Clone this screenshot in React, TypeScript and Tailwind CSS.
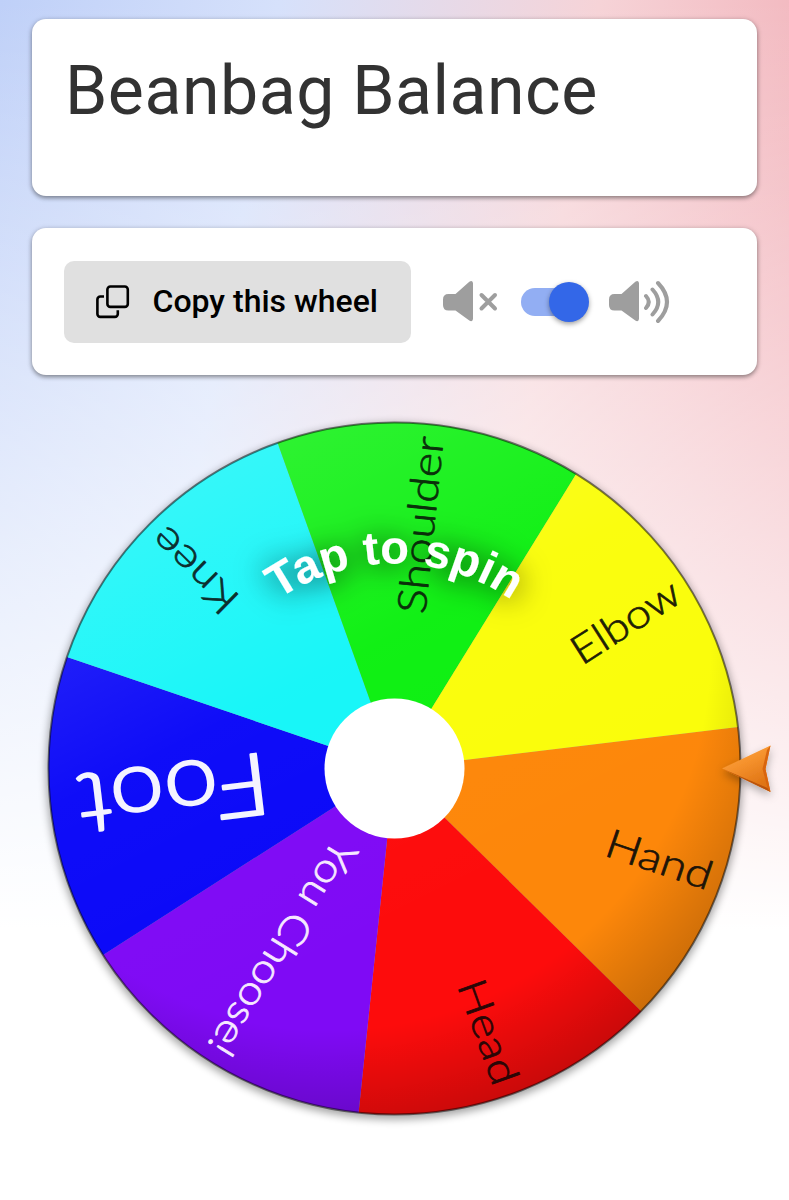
import type { ReactNode } from 'react';

const CX = 394.5;
const CY = 768.5;
const R = 346;
const STEP = 360 / 7;
const FIRST = -6.9;

type Slice = {
  label: string;
  color: string;
  text: string;
  size: number;
  weight: number;
  start: number;
  end: number;
};

const slices: Slice[] = [
  { label: 'Hand', color: '#fd870a', text: '#1c1408', size: 40, weight: 0.7, start: 225, end: 335 },
  { label: 'Head', color: '#fd0c0c', text: '#2a0606', size: 40, weight: 0.7, start: 225, end: 334 },
  { label: 'You Choose!', color: '#7f0af5', text: '#f6e9ff', size: 40, weight: 0.8, start: 89, end: 335 },
  { label: 'Foot', color: '#0a08f8', text: '#f4f4ff', size: 86, weight: 2.2, start: 126, end: 318 },
  { label: 'Knee', color: '#14f6f8', text: '#0c2e2e', size: 40, weight: 0.7, start: 229, end: 334 },
  { label: 'Shoulder', color: '#0cf010', text: '#0a300a', size: 40, weight: 0.7, start: 156, end: 334 },
  { label: 'Elbow', color: '#fafd0a', text: '#1e1e06', size: 40, weight: 0.7, start: 213, end: 334 },
];

function point(angle: number, r: number) {
  const a = (angle * Math.PI) / 180;
  return `${CX + r * Math.cos(a)} ${CY + r * Math.sin(a)}`;
}

export default function App() {
  return (
    <div className="relative w-[789px] h-[1200px] overflow-hidden bg-white font-[Roboto,sans-serif]">
      <div className="absolute inset-0 bg-[linear-gradient(to_bottom,transparent_0px,rgba(255,255,255,0.47)_440px,#fff_930px),linear-gradient(100deg,#bfd0f8_0%,#d6e1fb_28%,#f6d3d7_60%,#f0a5ae_96%)]" />
      <div className="relative flex flex-col">
        <div className="flex flex-col gap-8 px-8 pt-[19px]">
          <Card className="h-[177px] px-[33px] pt-[32px]">
            <h1 className="text-[68px] leading-[80px] tracking-[0.5px] text-[#323232] whitespace-nowrap">Beanbag Balance</h1>
          </Card>
          <Card className="h-[147px] flex items-center px-8">
            <button className="flex items-center w-[347px] h-[82px] pl-8 rounded-[10px] bg-[#e0e0e0] text-black">
              <CopyIcon />
              <span className="ml-[22.5px] -mt-[2px] text-[32px] font-medium whitespace-nowrap">Copy this wheel</span>
            </button>
            <div className="flex items-center ml-8">
              <SpeakerOff />
              <Toggle />
              <SpeakerOn />
            </div>
          </Card>
        </div>
        <Wheel />
      </div>
    </div>
  );
}

function Card({ className, children }: { className: string; children: ReactNode }) {
  return (
    <section className={`rounded-[14px] bg-white shadow-[0_2px_4px_rgba(0,0,0,0.36),0_1px_6px_rgba(0,0,0,0.14)] ${className}`}>
      {children}
    </section>
  );
}

function CopyIcon() {
  return (
    <svg width="34" height="34" viewBox="0 0 34 34" fill="none" stroke="currentColor" strokeWidth="2.6">
      <rect x="11.4" y="1.5" width="20.4" height="20.4" rx="3" />
      <path d="M8 11.5H4.3a2.900 2.900 0 0 0-2.900 2.900v14.600a2.900 2.900 0 0 0 2.900 2.900h14.600a2.900 2.900 0 0 0 2.900-2.900v-3.800" />
    </svg>
  );
}

const SPEAKER = 'M5.5 14H12.5L26.3 1.8Q29.3-.2 30 3V39Q29.3 42.6 26.3 40.6L12.5 30.5H5.5Q0 30.5 0 25V19.5Q0 14 5.5 14Z';

function SpeakerOff() {
  return (
    <svg width="56" height="44" viewBox="0 0 56 44" className="text-[#9e9e9e]">
      <path d={SPEAKER} fill="currentColor" />
      <path d="M38.5 15L52 28.5M52 15L38.5 28.5" stroke="currentColor" strokeWidth="4" strokeLinecap="round" />
    </svg>
  );
}

function SpeakerOn() {
  return (
    <svg width="62" height="44" viewBox="0 0 62 44" className="ml-5 text-[#9e9e9e]">
      <path d={SPEAKER} fill="currentColor" />
      <path
        d="M37 16Q42.5 22 37 28M43.5 9.5Q55 22 43.5 34.5M49 3Q67 22 49 41"
        fill="none"
        stroke="currentColor"
        strokeWidth="4"
        strokeLinecap="round"
      />
    </svg>
  );
}

function Toggle() {
  return (
    <div className="flex items-center justify-end ml-[22px] w-[68px] h-10">
      <div className="w-[54px] h-7 -mr-[26px] rounded-full bg-[#92aef3]" />
      <div className="relative w-10 h-10 shrink-0 rounded-full bg-[#3367e8] shadow-[0_2px_5px_rgba(0,0,0,0.38)]" />
    </div>
  );
}

function Wheel() {
  return (
    <svg width="789" height="810" viewBox="0 390 789 810" className="mt-[15px]">
      <defs>
        <radialGradient id="shade" gradientUnits="userSpaceOnUse" cx="330" cy="650" r="500">
          <stop offset="0.76" stopColor="#000" stopOpacity="0" />
          <stop offset="1" stopColor="#000" stopOpacity="0.24" />
        </radialGradient>
        <linearGradient id="shine" x1="0.25" y1="0" x2="0.6" y2="0.7">
          <stop offset="0" stopColor="#fff" stopOpacity="0.16" />
          <stop offset="0.5" stopColor="#fff" stopOpacity="0.02" />
          <stop offset="1" stopColor="#fff" stopOpacity="0" />
        </linearGradient>
        <linearGradient id="arrow" x1="0" y1="0" x2="0.5" y2="1">
          <stop offset="0" stopColor="#ffab45" />
          <stop offset="0.5" stopColor="#f5912c" />
          <stop offset="1" stopColor="#df7414" />
        </linearGradient>
        <filter id="blur" x="-20%" y="-20%" width="140%" height="140%">
          <feGaussianBlur stdDeviation="4" />
        </filter>
        <filter id="textShadow" x="-30%" y="-80%" width="160%" height="260%">
          <feDropShadow dx="0" dy="2" stdDeviation="15" floodColor="#000" floodOpacity="0.8" />
        </filter>
        <filter id="arrowShadow" x="-50%" y="-50%" width="200%" height="200%">
          <feDropShadow dx="0" dy="4" stdDeviation="4" floodColor="#000" floodOpacity="0.3" />
        </filter>
        <path id="arc" d={`M${CX - 205} ${CY}A205 205 0 0 1 ${CX + 205} ${CY}`} />
      </defs>

      <circle cx={CX} cy={CY + 3} r={R + 2} opacity="0.36" filter="url(#blur)" />
      {slices.map((s, i) => {
        const from = FIRST + i * STEP;
        return (
          <path
            key={s.label}
            d={`M${CX} ${CY}L${point(from, R)}A${R} ${R} 0 0 1 ${point(from + STEP, R)}Z`}
            fill={s.color}
          />
        );
      })}
      <circle cx={CX} cy={CY} r={R} fill="url(#shade)" />
      <circle cx={CX} cy={CY} r={R} fill="url(#shine)" />
      <circle cx={CX} cy={CY} r={R} fill="none" stroke="#000" strokeOpacity="0.5" strokeWidth="2" />

      {slices.map((s, i) => (
        <g key={s.label} transform={`translate(${CX} ${CY}) rotate(${FIRST + (i + 0.5) * STEP})`}>
          <text
            x={s.start}
            y={s.size * 0.365}
            textLength={s.end - s.start}
            lengthAdjust="spacingAndGlyphs"
            fill={s.text}
            stroke={s.text}
            strokeWidth={s.weight}
            strokeLinejoin="round"
            fontSize={s.size}
            className="font-[Lato,sans-serif] font-light"
          >
            {s.label}
          </text>
        </g>
      ))}

      <circle cx={CX} cy={CY} r="70" fill="#fff" />

      <g filter="url(#textShadow)">
        <text fill="#fff" fontSize="47" letterSpacing="0.1" textAnchor="middle" className="font-['Liberation_Sans',sans-serif] font-bold">
          <textPath href="#arc" startOffset="50.1%">Tap to spin</textPath>
        </text>
      </g>

      <g filter="url(#arrowShadow)">
        <path d="M722 768.5L770.5 745.5L765.5 769L770.5 792Z" fill="url(#arrow)" />
        <path d="M722 768.5L770.5 792L767.5 788Z" fill="#b95308" />
        <path d="M770.5 745.5L765.5 769L770.5 792L767.5 788L762.5 769L767 750Z" fill="#d9650f" />
      </g>
    </svg>
  );
}
